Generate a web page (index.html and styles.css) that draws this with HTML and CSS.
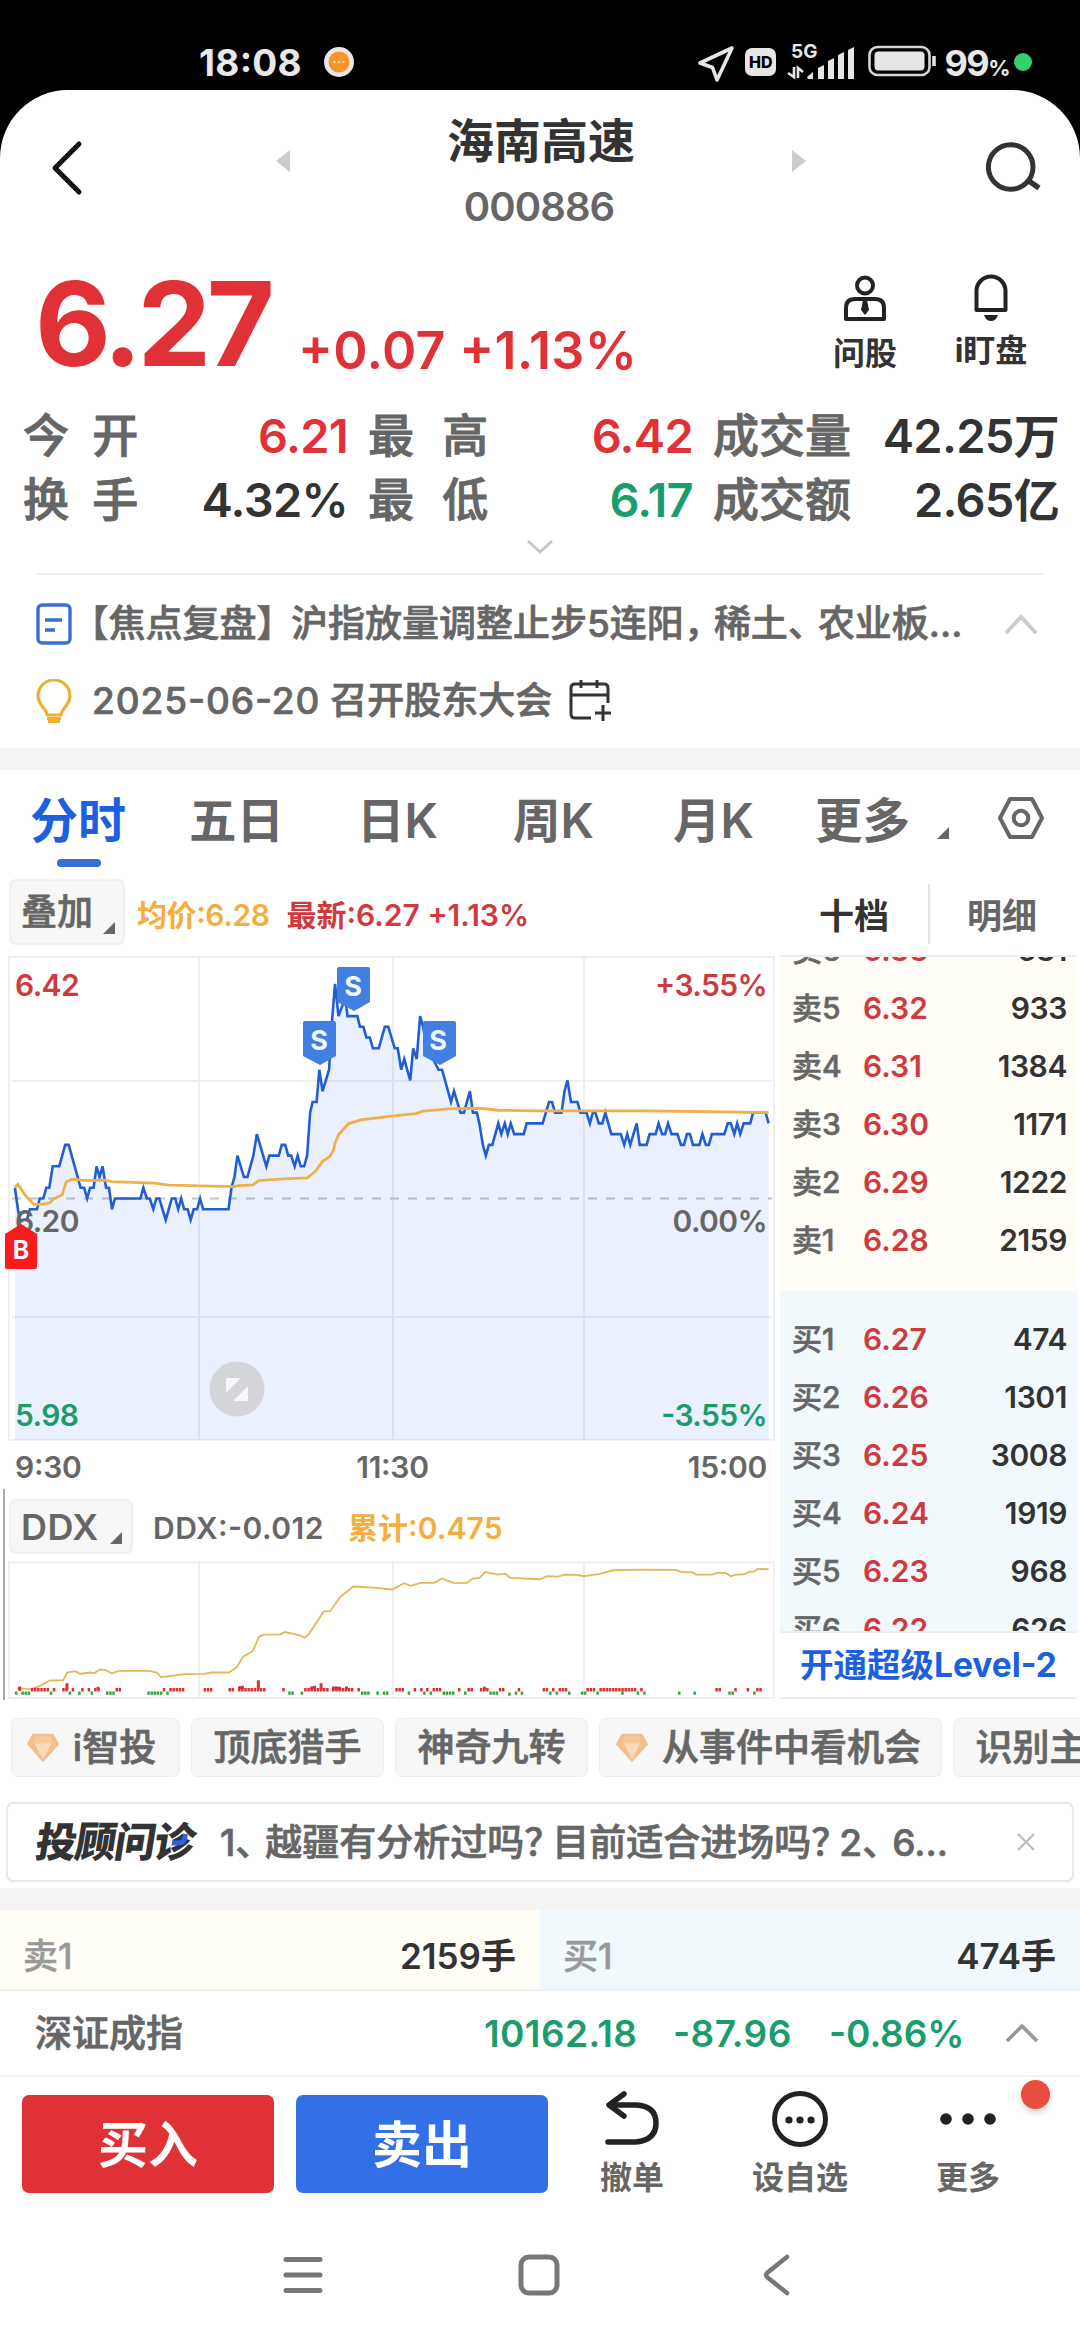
FILE: index.html
```html
<!DOCTYPE html>
<html lang="zh-CN">
<head>
<meta charset="utf-8">
<title>海南高速 000886</title>
<link rel="stylesheet" href="styles.css">
</head>
<body>
<div class="status">
  <div class="status-left">
    <span class="clock">18:08</span>
    <svg width="30" height="30" viewBox="0 0 30 30"><circle cx="15" cy="15" r="15" fill="#e8e8e8"/><circle cx="15" cy="15" r="10.500" fill="#f7952d"/><g fill="#ffe0a8"><circle cx="10.500" cy="15" r="1.200"/><circle cx="15" cy="15" r="1.200"/><circle cx="19.500" cy="15" r="1.200"/></g></svg>
  </div>
  <div class="status-right">
    <svg width="38" height="38" viewBox="0 0 38 38"><path d="M35 3 L20 35 L15.500 22.500 L3 18 Z" fill="none" stroke="#e6e6e6" stroke-width="3.600" stroke-linejoin="round"/></svg>
    <span class="hd">HD</span>
    <svg class="signal" width="68" height="36" viewBox="0 0 68 36"><g fill="#e6e6e6"><path d="M19 33l6-5v7h-5z"/><path d="M30 24l6-3v14h-6zM40 17l6-3v21h-6zM50 11l6-3v27h-6zM60 6l6-3v32h-6z"/></g><path d="M0 29l6 4V23M10 34V24l5 4" fill="none" stroke="#e6e6e6" stroke-width="2.600"/><text x="3" y="14" class="net">5G</text></svg>
    <svg width="68" height="32" viewBox="0 0 68 32"><rect x="1.500" y="2" width="60" height="28" rx="8" fill="none" stroke="#d6d6d6" stroke-width="2.600"/><rect x="6.500" y="6.500" width="50" height="19" rx="4" fill="#e6e6e6"/><path d="M66 11v10" stroke="#e6e6e6" stroke-width="3.500"/></svg>
    <span class="batt">99<small>%</small></span><i class="green-dot"></i>
  </div>
</div>

<main class="app">
  <header class="head">
    <svg class="back" width="34" height="56" viewBox="0 0 34 56"><path d="M29 4L5 28l24 24" fill="none" stroke="#111" stroke-width="5" stroke-linecap="round" stroke-linejoin="round"/></svg>
    <svg class="prev" width="14" height="22" viewBox="0 0 14 22"><path d="M14 0v22L0 11z" fill="#ccc"/></svg>
    <div class="title"><h1>海南高速</h1><div class="code">000886</div></div>
    <svg class="next" width="14" height="22" viewBox="0 0 14 22"><path d="M0 0v22l14-11z" fill="#ccc"/></svg>
    <svg class="search" width="58" height="54" viewBox="0 0 58 54"><circle cx="24.700" cy="25" r="22.300" fill="none" stroke="#333" stroke-width="5"/><path d="M43 39l10 7" stroke="#333" stroke-width="5.500"/></svg>
  </header>

  <section class="quote">
    <div class="price">6.27</div>
    <div class="change">+0.07 +1.13%</div>
    <div class="act act1"><svg width="44" height="48" viewBox="0 0 44 48"><g fill="none" stroke="#222" stroke-width="4"><circle cx="22" cy="11.500" r="8"/><path d="M3 45V34q0-9 9-9h20q9 0 9 9v11z" stroke-linejoin="round"/></g><path d="M20 26h4l2 10-4 5-4-5z" fill="#222"/></svg><span>问股</span></div>
    <div class="act act2"><svg width="38" height="48" viewBox="0 0 38 48"><path d="M4.500 36V17a14.500 14.500 0 0 1 29 0v19z" fill="none" stroke="#222" stroke-width="4" stroke-linejoin="round"/><path d="M12 41h14q-2 6-7 6t-7-6z" fill="#222"/></svg><span>i盯盘</span></div>
  </section>

  <section class="stats">
    <div><span class="lb s1">今 开</span><b class="red">6.21</b></div>
    <div><span class="lb s2">最 高</span><b class="red">6.42</b></div>
    <div><span class="lb">成交量</span><b>42.25<em>万</em></b></div>
    <div><span class="lb s1">换 手</span><b>4.32%</b></div>
    <div><span class="lb s2">最 低</span><b class="green">6.17</b></div>
    <div><span class="lb">成交额</span><b>2.65<em>亿</em></b></div>
  </section>
  <div class="expand"><svg width="28" height="16" viewBox="0 0 28 16"><path d="M2 2l12 11L26 2" fill="none" stroke="#c8c8c8" stroke-width="3"/></svg></div>

  <section class="news">
    <div class="news-row first">
      <svg width="36" height="42" viewBox="0 0 36 42"><rect x="2" y="2" width="32" height="38" rx="4" fill="none" stroke="#3a6fd0" stroke-width="3.400"/><path d="M9 17h17M9 27h10" stroke="#3a6fd0" stroke-width="3.400"/></svg>
      <p><span class="half">【</span>焦点复盘<span class="half">】</span><i class="sp"></i>沪指放量调整止步5连阳<span class="cm">，</span>稀土<span class="cm">、</span>农业板...</p>
      <svg class="up" width="36" height="22" viewBox="0 0 36 22"><path d="M3 20L18 4l15 16" fill="none" stroke="#ccc" stroke-width="4"/></svg>
    </div>
    <div class="news-row second">
      <svg width="36" height="44" viewBox="0 0 36 44"><g fill="none" stroke="#efae35" stroke-width="3.200"><path d="M11 36c0-6-9-10-9-19a16 16 0 0 1 32 0c0 9-9 13-9 19z" stroke-linejoin="round"/><path d="M11 39.500h14M12 42.500h12"/></g></svg>
      <p><span class="date">2025-06-20</span> 召开股东大会</p>
      <svg class="cal" width="42" height="44" viewBox="0 0 42 44"><path d="M22 39H6q-4 0-4-4V9q0-4 4-4h29q4 0 4 4v15M2 16h37M12 1v8M28 1v8M34 26v16M26 34h16" fill="none" stroke="#333" stroke-width="3"/></svg>
    </div>
  </section>
  <div class="band"></div>

  <nav class="tabs">
    <span class="tab t1 on">分时</span><span class="tab t2">五日</span><span class="tab t3">日K</span><span class="tab t4">周K</span><span class="tab t5">月K</span><span class="tab t6">更多</span>
    <svg class="tri" width="12" height="12" viewBox="0 0 12 12"><path d="M12 0v12H0z" fill="#666"/></svg>
    <svg class="hex" width="48" height="44" viewBox="0 0 48 44"><path d="M13 3h22l10 19-10 19H13L3 22z" fill="none" stroke="#666" stroke-width="4" stroke-linejoin="round"/><circle cx="24" cy="22" r="7.300" fill="none" stroke="#666" stroke-width="4"/></svg>
  </nav>

  <section class="market">
    <div class="charts">
      <div class="legend l1">
        <span class="pill p1">叠加<svg width="12" height="12" viewBox="0 0 12 12"><path d="M12 0v12H0z" fill="#666"/></svg></span>
        <span class="avg">均价:6.28</span><span class="last">最新:6.27 +1.13%</span>
      </div>
      <svg class="plot" width="780" height="490" viewBox="0 955 780 490">
        <g fill="none" stroke="#efeff1" stroke-width="2"><path d="M9 957H774V1440H9zM12 1081H772M12 1317H772M199 957V1440M393 957V1440M584 957V1440"/></g>
        <path d="M12 1198.500H772" stroke="#bfc3cc" stroke-width="2.200" stroke-dasharray="9 9"/>
        <g class="axis">
          <text x="15" y="996" class="red">6.42</text><text x="767" y="996" text-anchor="end" class="red">+3.55%</text>
        </g>
        <path class="area" transform="matrix(.4978 0 0 -10.73 0 1198.500)" d="M30 -22.500V1L36 -1L40 -2L54 -2L60 -1L74 -1L80 0L87 0L93 1L99 1L106 3L119 3L131 5L138 5L162 1L169 1L175 0L181 1L188 1L194 3L200 2L206 3L213 1L219 1L225 -1L231 0L282 0L288 1L295 0L301 0L308 -1L314 0L320 0L333 -2L345 0L352 0L358 -1L364 0L370 -1L377 -1L383 -2L389 -1L396 -1L402 0L408 -1L459 -1L465 1L471 2L477 4L490 2L497 2L509 4L516 6L535 3L541 4L560 4L566 5L573 5L579 4L585 4L592 3L598 4L604 3L611 3L617 4L623 8L628 9L636 9L641.500 12L648 10L661 12L666 16L673 20L680 17L688 18L693 19L698 17L718 17L723 16L730 16L736 15L743 15L749 14L761 14L773 16L780 16L793 14L799 14L806 12L812 13L824 11L830 14L837 13L844 17L850 16L857 14L870 13L881 12L888 12L906 9L912 10L925 8L932 8L944 10L950 8L958 8L963 7L970 5L976 4L982 5L989 5L1001 7L1007 6L1014 7L1020 6L1026 7L1033 6L1052 6L1058 7L1090 7L1103 9L1109 9L1115 8L1128 8L1134 10L1140 11L1147 9L1160 9L1166 8L1178 8L1185 7L1191 8L1196 8L1203 7L1210 7L1216 8L1228 6L1247 6L1254 5L1260 6L1266 5L1279 7L1285 5L1299 5L1305 6L1317 6L1323 7L1330 6L1336 6L1342 7L1349 6L1361 6L1368 5L1374 5L1380 6L1386 6L1392 5L1405 5L1411 6L1418 5L1424 5L1430 6L1455 6L1462 7L1468 7L1475 6L1481 7L1487 6L1494 7L1507 7L1513 8L1538 8L1544 7V-22.500Z"/>
        <path class="line" transform="matrix(.4978 0 0 -10.73 0 1198.500)" d="M30 1L36 -1L40 -2L54 -2L60 -1L74 -1L80 0L87 0L93 1L99 1L106 3L119 3L131 5L138 5L162 1L169 1L175 0L181 1L188 1L194 3L200 2L206 3L213 1L219 1L225 -1L231 0L282 0L288 1L295 0L301 0L308 -1L314 0L320 0L333 -2L345 0L352 0L358 -1L364 0L370 -1L377 -1L383 -2L389 -1L396 -1L402 0L408 -1L459 -1L465 1L471 2L477 4L490 2L497 2L509 4L516 6L535 3L541 4L560 4L566 5L573 5L579 4L585 4L592 3L598 4L604 3L611 3L617 4L623 8L628 9L636 9L641.500 12L648 10L661 12L666 16L673 20L680 17L688 18L693 19L698 17L718 17L723 16L730 16L736 15L743 15L749 14L761 14L773 16L780 16L793 14L799 14L806 12L812 13L824 11L830 14L837 13L844 17L850 16L857 14L870 13L881 12L888 12L906 9L912 10L925 8L932 8L944 10L950 8L958 8L963 7L970 5L976 4L982 5L989 5L1001 7L1007 6L1014 7L1020 6L1026 7L1033 6L1052 6L1058 7L1090 7L1103 9L1109 9L1115 8L1128 8L1134 10L1140 11L1147 9L1160 9L1166 8L1178 8L1185 7L1191 8L1196 8L1203 7L1210 7L1216 8L1228 6L1247 6L1254 5L1260 6L1266 5L1279 7L1285 5L1299 5L1305 6L1317 6L1323 7L1330 6L1336 6L1342 7L1349 6L1361 6L1368 5L1374 5L1380 6L1386 6L1392 5L1405 5L1411 6L1418 5L1424 5L1430 6L1455 6L1462 7L1468 7L1475 6L1481 7L1487 6L1494 7L1507 7L1513 8L1538 8L1544 7"/>
        <path class="mean" transform="matrix(.4978 0 0 .3317 0 1090)" d="M30 294L36 284L50 316L68 345L84 345L100 340L108 328L125 316L133 277L145 269L160 271L175 273L210 272L225 276L310 281L340 287L470 291L480 288L508 286L520 273L560 269L617 265L633 246L648 215L663 200L670 180L673 160L680 135L700 102L725 90L790 78L835 71L850 64L900 57L965 55L1000 61L1080 63L1300 63L1544 68"/>
        <g class="axis">
          <text x="15" y="1232" class="grey">6.20</text><text x="767" y="1232" text-anchor="end" class="grey">0.00%</text>
          <text x="15" y="1426" class="green">5.98</text><text x="767" y="1426" text-anchor="end" class="green">-3.55%</text>
        </g>
        <g fill="#427fe2"><path d="M337 969q0-2 2-2h29q2 0 2 2v33l-16 9-17-9zM303 1023q0-2 2-2h29q2 0 2 2v33l-16 9-17-9zM423 1023q0-2 2-2h29q2 0 2 2v33l-16 9-17-9z"/></g>
        <g class="flag"><text x="353" y="996">S</text><text x="319" y="1050">S</text><text x="438" y="1050">S</text></g>
        <path d="M5 1234l16-10 16 10v33q0 2-2 2H7q-2 0-2-2z" fill="#fb1b1b"/>
        <g class="flag"><text x="21" y="1259" class="buyflag">B</text></g>
        <circle cx="237" cy="1389" r="27.500" fill="#d5d6da"/>
        <path d="M226 1378h15l-15 15zM248 1386v15h-15z" fill="#f6f7fb"/>
      </svg>
      <div class="times"><span>9:30</span><span>11:30</span><span>15:00</span></div>
      <div class="ddx">
        <div class="legend l2">
          <span class="pill p2">DDX<svg width="12" height="12" viewBox="0 0 12 12"><path d="M12 0v12H0z" fill="#666"/></svg></span>
          <span class="dv">DDX:-0.012</span><span class="avg sum">累计:0.475</span>
        </div>
        <svg class="plot" width="775" height="144" viewBox="5 1556 775 144">
          <path d="M9 1562.500H774V1698H9zM199 1562V1698M393 1562V1698M584 1562V1698" fill="none" stroke="#efeff1" stroke-width="2"/>
          <g transform="matrix(.4978 0 0 .332 0 1470)">
            <path class="cum" d="M35 660L45 658L60 661L78 652L100 634L127 633L135 610L150 606L162 614L180 610L190 612L200 601L212 602L225 613L238 605L300 605L315 610L323 624L335 622L370 615L410 614L425 610L460 610L475 595L488 563L508 545L520 503L530 496L562 496L573 488L600 497L612 505L620 495L640 450L650 426L663 426L683 383L710 351L750 354L788 360L812 341L825 349L845 340L872 340L888 327L910 340L937 341L950 327L963 325L975 307L1000 315L1015 312L1025 325L1085 329L1098 320L1120 321L1135 315L1160 316L1172 320L1205 313L1232 302L1290 300L1358 301L1368 307L1390 308L1398 315L1432 315L1440 310L1458 310L1468 320L1480 315L1495 314L1505 306L1515 306L1522 298L1544 299"/>
            <path d="M37 660h5M62 662h37M106 662h6M125 662h12M144 662h6M163 662h6M176 662h6M189 662h12M232 662h11M327 662h6M340 662h31M409 662h18M459 662h12M478 662h56M567 662h6M611 662h50M667 662h44M718 662h6M794 662h18M831 662h6M844 662h6M856 662h6M869 662h18M920 662h6M939 662h12M964 662h18M1002 662h12M1040 662h5M1090 662h12M1109 662h6M1122 662h18M1178 662h19M1204 662h75M1286 662h6M1437 662h12M1475 662h6M1500 662h6M1519 662h12" stroke="#dd3030" stroke-width="11" stroke-dasharray="5 1.300"/>
            <path d="M39.500 652v10M134.500 642v20M197 653v8M481 651v10M487 650v10M519 633v28M626 652v10M632 650v10M645 642v20M670 652v10M676 652v10M682 653v10M696 652v10M973 653v9" stroke="#dd3030" stroke-width="6"/>
            <path d="M30 672h5M43 672h18M100 672h6M138 672h5M157 672h6M182 672h6M213 672h18M296 672h31M334 672h6M579 672h12M604 672h6M725 672h18M756 672h6M769 672h12M819 672h6M850 672h6M863 672h6M889 672h24M932 672h6M983 672h18M1021 675h5M1034 672h5M1046 672h5M1103 672h5M1116 672h5M1141 672h5M1167 672h11M1198 672h5M1248 672h5M1279 672h5M1292 672h5M1362 672h5M1393 672h5M1463 672h12M1513 672h5" stroke="#33a33b" stroke-width="10" stroke-dasharray="5 1.300"/>
          </g>
        </svg>
      </div>
    </div>

    <aside class="book">
      <div class="book-tabs"><span class="on">十档</span><span>明细</span></div>
      <div class="asks">
        <div class="lv"><span>卖6</span><b>6.33</b><strong>631</strong></div>
        <div class="lv"><span>卖5</span><b>6.32</b><strong>933</strong></div>
        <div class="lv"><span>卖4</span><b>6.31</b><strong>1384</strong></div>
        <div class="lv"><span>卖3</span><b>6.30</b><strong>1171</strong></div>
        <div class="lv"><span>卖2</span><b>6.29</b><strong>1222</strong></div>
        <div class="lv"><span>卖1</span><b>6.28</b><strong>2159</strong></div>
      </div>
      <div class="bids">
        <div class="lv"><span>买1</span><b>6.27</b><strong>474</strong></div>
        <div class="lv"><span>买2</span><b>6.26</b><strong>1301</strong></div>
        <div class="lv"><span>买3</span><b>6.25</b><strong>3008</strong></div>
        <div class="lv"><span>买4</span><b>6.24</b><strong>1919</strong></div>
        <div class="lv"><span>买5</span><b>6.23</b><strong>968</strong></div>
        <div class="lv"><span>买6</span><b>6.22</b><strong>626</strong></div>
      </div>
      <div class="level2">开通超级Level-2</div>
    </aside>
  </section>

  <section class="chips">
    <span class="chip c1"><svg width="34" height="32" viewBox="0 0 36 32"><path d="M7 1h22l6 11-17 19L1 12z" fill="#efbf8c"/><path d="M9 11h18l-9 17z" fill="#f8dcba"/><path d="M10 3h16l2 8H8z" fill="#f3c99c"/></svg>i智投</span>
    <span class="chip c2">顶底猎手</span>
    <span class="chip c2">神奇九转</span>
    <span class="chip c4"><svg width="34" height="32" viewBox="0 0 36 32"><path d="M7 1h22l6 11-17 19L1 12z" fill="#efbf8c"/><path d="M9 11h18l-9 17z" fill="#f8dcba"/><path d="M10 3h16l2 8H8z" fill="#f3c99c"/></svg>从事件中看机会</span>
    <span class="chip c5">识别主力</span>
  </section>

  <section class="consult">
    <strong>投顾问诊<svg class="tick" width="20" height="14" viewBox="0 0 20 14"><path d="M2 11h7q5 0 5-5V2" fill="none" stroke="#2a66e0" stroke-width="5"/></svg></strong>
    <p>1<span class="cm">、</span>越疆有分析过吗<span class="qm">？</span>目前适合进场吗<span class="qm">？</span>2<span class="cm">、</span>6...</p>
    <svg class="x" width="20" height="20" viewBox="0 0 20 20"><path d="M2 2l16 16M18 2L2 18" stroke="#bbb" stroke-width="2.200"/></svg>
  </section>
  <div class="band b2"></div>

  <section class="best"><div class="ask"><span>卖1</span><b>2159手</b></div><div class="bid"><span>买1</span><b>474手</b></div></section>
  <section class="index">
    <span class="name">深证成指</span><b class="i1">10162.18</b><b class="i2">-87.96</b><b class="i3">-0.86%</b>
    <svg width="34" height="20" viewBox="0 0 34 20"><path d="M2 18L17 3l15 15" fill="none" stroke="#999" stroke-width="3.600"/></svg>
  </section>

  <footer class="trade">
    <button class="buy">买入</button><button class="sell">卖出</button>
    <div class="tool w1"><svg width="56" height="58" viewBox="0 0 56 58"><path d="M4 52h28q20-2 20-19T32 15H6" fill="none" stroke="#222" stroke-width="5.500" stroke-linecap="round"/><path d="M20 4L5 15l15 11" fill="none" stroke="#222" stroke-width="5.500" stroke-linecap="round" stroke-linejoin="round"/></svg><span>撤单</span></div>
    <div class="tool w2"><svg width="56" height="58" viewBox="0 0 56 58"><circle cx="28" cy="29" r="25.500" fill="none" stroke="#222" stroke-width="5"/><g fill="#222"><circle cx="17" cy="30" r="3.600"/><circle cx="28" cy="30" r="3.600"/><circle cx="39" cy="30" r="3.600"/></g></svg><span>设自选</span></div>
    <div class="tool w3"><svg width="56" height="58" viewBox="0 0 56 58"><g fill="#222"><circle cx="6" cy="29" r="5.800"/><circle cx="28" cy="29" r="5.800"/><circle cx="50" cy="29" r="5.800"/></g></svg><span>更多</span><i class="badge"></i></div>
  </footer>

  <div class="sysnav">
    <svg width="40" height="38" viewBox="0 0 40 38"><path d="M3 3.500h34M3 19h34M3 34.500h34" stroke="#777" stroke-width="5" stroke-linecap="round"/></svg>
    <svg width="42" height="42" viewBox="0 0 42 42"><rect x="3" y="3" width="36" height="36" rx="8" fill="none" stroke="#777" stroke-width="5"/></svg>
    <svg width="28" height="42" viewBox="0 0 28 42"><path d="M25 3L5 19q-2 2 0 4l20 16" fill="none" stroke="#777" stroke-width="4.500" stroke-linecap="round"/></svg>
  </div>
</main>
</body>
</html>
```
FILE: styles.css
```css
* { box-sizing: border-box; margin: 0; padding: 0; }
body { width: 1080px; height: 2340px; overflow: hidden; background: #000; color: #333; font-family: Inter, "Noto Sans CJK SC", sans-serif; font-weight: 600; line-height: 1; font-feature-settings: "case"; }
svg { display: block; flex: none; }
i, em { font-style: normal; }
.red { color: #e03236; fill: #cf3a3f; }
.green { color: #1b9c6d; fill: #1b9c6d; }
.grey { fill: #666; }

/* status bar */
.status { height: 90px; display: flex; justify-content: space-between; padding: 34px 48px 0 199px; color: #e8e8e8; }
.status-left, .status-right { display: flex; align-items: flex-start; height: 56px; }
.clock { width: 125px; font-size: 37px; font-weight: 700; line-height: 57px; letter-spacing: .3px; }
.status-left svg { margin-top: 13px; }
.status-right svg { margin-top: 11px; }
.hd { width: 31px; height: 28px; background: #e6e6e6; color: #000; font-size: 16px; font-weight: 800; line-height: 29px; text-align: center; border-radius: 7px; margin: 14px 12px 0 10px; }
.status-right .signal { margin: 10px 12px 0 0; overflow: visible; }
.net { font-size: 19px; font-weight: 700; fill: #e6e6e6; }
.status-right .batt { font-size: 36px; font-weight: 700; line-height: 59px; margin-left: 8px; letter-spacing: -1.500px; }
.batt small { font-size: 22px; }
.green-dot { width: 18px; height: 18px; border-radius: 50%; background: #35d06a; margin: 19px 0 0 5px; }

/* header */
.app { height: 2250px; background: #fff; border-radius: 68px 68px 0 0; overflow: hidden; }
.head { height: 160px; display: flex; padding-left: 50px; }
.back { margin-top: 50px; }
.prev { margin: 60px 0 0 192px; }
.title { width: 480px; margin: 0 11px; text-align: center; padding-top: 25px; }
.title h1 { font-size: 47px; font-weight: 700; line-height: 52px; color: #333; }
.code { font-size: 40px; line-height: 44px; margin-top: 18px; color: #666; letter-spacing: -.9px; margin-right: 4px; }
.next { margin-top: 60px; }
.search { margin: 52px 0 0 180px; }

/* quote */
.quote { height: 157px; display: flex; color: #e03236; padding-left: 35px; }
.price { width: 263px; font-size: 117px; font-weight: 700; line-height: 148px; letter-spacing: -4.500px; }
.change { width: 522px; font-size: 52px; line-height: 60px; padding-top: 71px; letter-spacing: .3px; white-space: nowrap; }
.act { width: 90px; display: flex; flex-direction: column; align-items: center; padding-top: 24px; color: #333; font-size: 32px; font-weight: 700; white-space: nowrap; }
.act span { margin-top: 12px; line-height: 40px; }
.act2 { margin-left: 36px; }
.act2 span { margin-top: 9px; }

.stats { display: grid; grid-template-columns: 322px 322px 343px; column-gap: 23px; grid-auto-rows: 64px; padding: 0 24px; height: 128px; margin-top: -4px; }
.stats div { display: flex; justify-content: space-between; align-items: center; font-size: 46px; white-space: nowrap; }
.stats .lb { color: #666; font-weight: 500; -webkit-text-stroke: .9px #666; margin-left: -1px; }
.s1 { word-spacing: 11px; }
.s2 { word-spacing: 16px; }
.stats b { font-weight: 600; font-size: 47px; letter-spacing: -.7px; margin-right: -2px; }
.stats em { font-size: 46px; }
.expand { height: 44px; margin: 0 36px; border-bottom: 2px solid #f0f0f0; display: flex; justify-content: center; padding-top: 8px; }

.news { height: 173px; color: #666; font-weight: 500; padding: 10px 36px 0 36px; }
.news-row { display: flex; align-items: center; height: 77px; font-size: 37px; white-space: nowrap; }
.news-row p { margin-left: 18px; width: 913px; -webkit-text-stroke: .7px #666; }
.news-row.second p { width: auto; margin: 0 17px 0 20px; }
.date { letter-spacing: .9px; }
.half { font-feature-settings: "halt"; }
.sp { display: inline-block; width: 16px; }
.cm { margin-right: -7px; }
.band { height: 22px; background: #f4f4f4; }

.tabs { height: 109px; display: flex; padding-left: 30px; color: #666; font-size: 47.500px; line-height: 102px; }
.tab { flex: none; }
.t1 { width: 159px; } .t2 { width: 168px; } .t3 { width: 156px; } .t4 { width: 160px; } .t5 { width: 142px; } .t6 { width: 122px; }
.tabs .on { color: #1c5fe0; font-weight: 700; font-size: 48px; }
.tabs .on::after { content: ""; display: block; width: 44px; height: 8px; border-radius: 4px; background: #376fd8; margin: -13px 0 0 27px; }
.tri { margin-top: 57px; }
.hex { margin: 26px 0 0 48px; }

/* charts */
.market { display: flex; height: 821px; }
.charts { width: 780px; }
.legend { display: flex; white-space: nowrap; font-size: 30px; }
.l1 { height: 76px; padding-left: 9px; }
.pill { display: flex; background: #f7f7f7; border: 2px solid #f1f1f1; border-radius: 7px; color: #666; font-size: 36px; padding-left: 10px; }
.p1 { width: 116px; height: 66px; line-height: 62px; font-weight: 500; -webkit-text-stroke: .7px #666; }
.p1 svg { margin: 41px 0 0 10px; }
.avg { color: #f3ae3d; line-height: 72px; margin-left: 12px; letter-spacing: -.4px; }
.last { color: #cf3a3f; line-height: 72px; margin-left: 17px; letter-spacing: 0; }
.axis { font-size: 30px; font-weight: 600; letter-spacing: -.6px; }
.area { fill: rgba(60,120,250,.11); }
.line { fill: none; stroke: #215fd0; stroke-width: 2.600px; vector-effect: non-scaling-stroke; }
.mean { fill: none; stroke: #efb04a; stroke-width: 2.800px; vector-effect: non-scaling-stroke; }
.cum { fill: none; stroke: #e8b557; stroke-width: 1.800px; vector-effect: non-scaling-stroke; }
.flag { font-size: 27px; font-weight: 700; fill: #f3f7ff; text-anchor: middle; }
.buyflag { font-size: 25px; }
.times { height: 44px; display: grid; grid-template-columns: 1fr 1fr 1fr; padding: 0 13px 0 15px; font-size: 30px; line-height: 44px; color: #666; letter-spacing: -.3px; }
.times span:nth-child(2) { text-align: center; padding-left: 3px; }
.times span:nth-child(3) { text-align: right; }
.ddx { height: 211px; border-left: 2px solid #aaa; margin-left: 3px; }
.l2 { height: 67px; padding: 10px 0 0 4px; }
.p2 { width: 124px; height: 55px; line-height: 52px; letter-spacing: .5px; }
.p2 svg { margin: 31px 0 0 11px; }
.dv { color: #666; line-height: 58px; margin-left: 20px; letter-spacing: .5px; }
.sum { line-height: 58px; margin-left: 24px; letter-spacing: .1px; }

/* order book */
.book { width: 297px; }
.book-tabs { height: 78px; border-bottom: 2px solid #eee; display: flex; font-size: 35px; color: #666; }
.book-tabs span { width: 148px; text-align: center; line-height: 74px; }
.book-tabs .on { font-weight: 700; color: #333; }
.book-tabs span + span { background: linear-gradient(#e6e6e6, #e6e6e6) 0 5px / 2px 60px no-repeat; }
.asks { height: 331px; overflow: hidden; background: #fffdf6; display: flex; flex-direction: column; justify-content: flex-end; padding-bottom: 19px; }
.bids { height: 340px; margin-top: 3px; overflow: hidden; background: #f2f9fd; padding-top: 19px; }
.lv { flex: none; height: 58px; display: flex; align-items: center; font-size: 30px; padding: 0 10px 0 12px; color: #666; }
.lv span { width: 71px; font-size: 30px; font-weight: 500; -webkit-text-stroke: .6px #666; }
.lv b { color: #cf3a3f; font-weight: 600; }
.lv strong { color: #333; margin-left: auto; font-weight: 600; letter-spacing: -.4px; }
.level2 { height: 68px; border: solid #eee; border-width: 2px 0; text-align: center; font-size: 33.500px; font-weight: 700; line-height: 65px; color: #1c5fe0; white-space: nowrap; }

.chips { display: flex; gap: 11px; padding: 18px 0 0 11px; height: 102px; overflow: hidden; }
.chip { flex: none; display: flex; align-items: center; justify-content: center; height: 59px; border: 1px solid #eee; border-radius: 7px; background: #f7f7f7; color: #666; font-size: 37px; font-weight: 500; white-space: nowrap; -webkit-text-stroke: .7px #666; }
.chip svg { margin-right: 13px; }
.c1 { width: 169px; padding-right: 9px; } .c2 { width: 193px; } .c4 { width: 343px; padding-right: 5px; } .c5 { width: 193px; }

.consult { height: 80px; margin: 0 6px; border: 2px solid #e9e9e9; border-radius: 7px; display: flex; align-items: center; white-space: nowrap; color: #666; font-size: 37px; font-weight: 500; }
.consult strong { position: relative; width: 160px; margin-left: 28px; font-size: 41px; font-weight: 900; color: #333; letter-spacing: -1.500px; transform: skewX(-9deg); }
.tick { position: absolute; left: 134px; top: 10px; }
.consult p { margin-left: 24px; width: 791px; -webkit-text-stroke: .7px #666; }
.qm { margin-right: -9px; }
.x { margin-left: 5px; }
.b2 { margin-top: 6px; }

.best { display: flex; height: 81px; border-bottom: 2px solid #f2f2f2; font-size: 35px; }
.best div { width: 540px; display: flex; justify-content: space-between; align-items: center; padding: 14px 24px 0 23px; }
.best span { color: #999; font-weight: 500; -webkit-text-stroke: .5px #999; }
.best b { font-weight: 600; font-size: 35px; }
.ask { background: #fffdf6; }
.bid { background: #f2f9fd; }
.index { height: 86px; display: flex; align-items: center; padding-left: 35px; font-size: 37px; color: #1b9c6d; border-bottom: 2px solid #f2f2f2; }
.index .name { width: 449px; color: #666; font-weight: 500; -webkit-text-stroke: .7px #666; }
.index b { font-weight: 600; letter-spacing: .4px; }
.i1 { width: 189px; } .i2 { width: 156px; } .i3 { width: 176px; }
.index .i3 { letter-spacing: -.1px; }

/* trade bar */
.trade { display: flex; height: 136px; padding: 18px 0 0 22px; }
button { width: 252px; height: 98px; border: 0; border-radius: 7px; color: #fff; background: #e03236; font: 700 50px/100px Inter, "Noto Sans CJK SC", sans-serif; }
.sell { background: #3370e8; margin-left: 22px; }
.tool { position: relative; display: flex; flex-direction: column; align-items: center; width: 120px; font-size: 32px; color: #666; }
.tool span { margin-top: 8px; line-height: 44px; }
.tool svg { margin-top: -5px; }
.w1 { margin-left: 24px; } .w2 { margin-left: 48px; } .w3 { margin-left: 48px; }
.badge { position: absolute; left: 113px; top: -15px; width: 29px; height: 29px; border-radius: 50%; background: #e94e3c; box-shadow: 0 3px 6px rgba(0,0,0,.2); }
.sysnav { display: flex; align-items: center; height: 124px; padding: 0 0 0 283px; }
.sysnav svg + svg { margin-left: 195px; }
.sysnav svg + svg + svg { margin-left: 202px; }
```
